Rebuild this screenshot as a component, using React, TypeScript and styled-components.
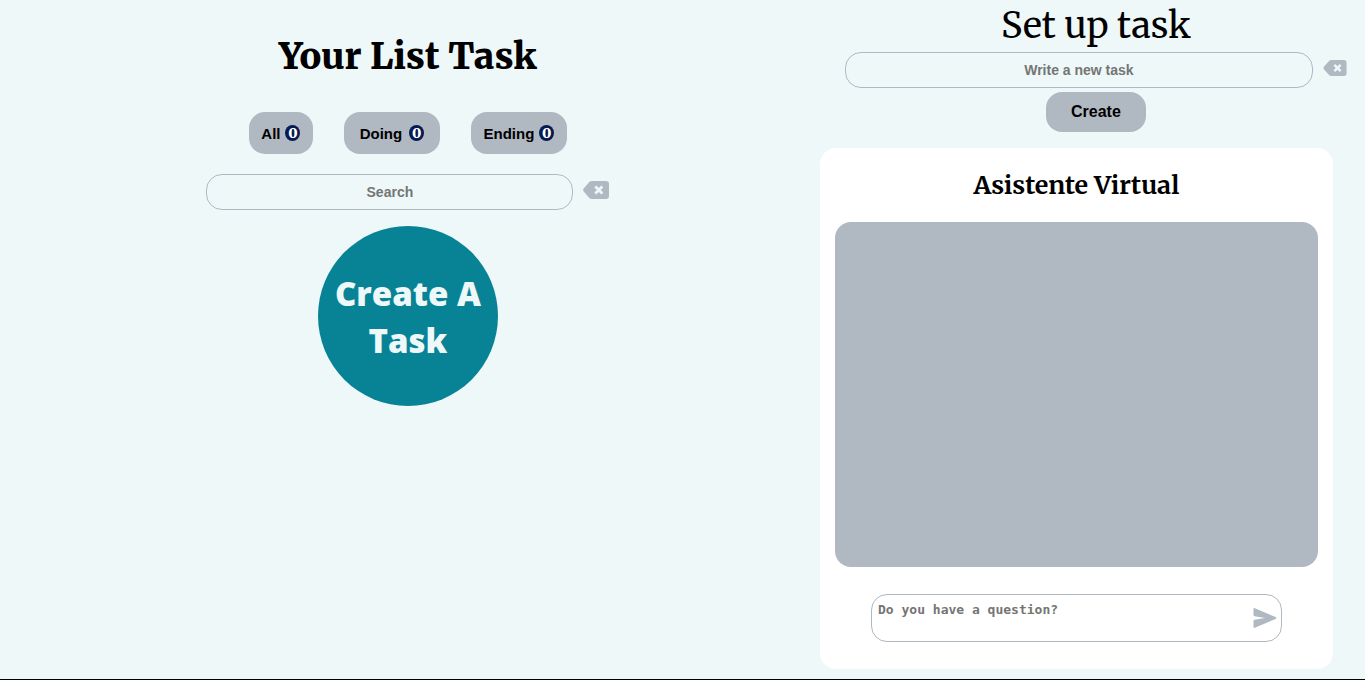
import React from "react";
import styled, { createGlobalStyle } from "styled-components";

const GlobalStyle = createGlobalStyle`
  *, *::before, *::after { box-sizing: border-box; }
  body {
    margin: 0;
    background: #eef8f9;
    color: #000;
    font-family: "Merriweather", "DejaVu Serif", serif;
  }
  h1, h2, p { margin: 0; }
`;

const Page = styled.main`
  display: grid;
  grid-template-columns: minmax(0, 3fr) minmax(0, 2fr);
  column-gap: 2px;
  min-height: 100vh;
  border-bottom: 1px solid #000;
`;

const ListPanel = styled.section`
  display: flex;
  flex-direction: column;
  align-items: center;
  padding: 34px 2px 0 0;
`;

const ListTitle = styled.h1`
  font-size: 36px;
  line-height: 46px;
  font-weight: 900;
`;

const Filters = styled.nav`
  display: flex;
  gap: 31px;
  margin-top: 32px;
`;

const Pill = styled.button`
  border: 0;
  border-radius: 16px;
  background: #b0b8c2;
  color: #000;
  font-family: "Liberation Sans", Arial, sans-serif;
  font-weight: 700;
`;

const FilterButton = styled(Pill)<{ $wide?: boolean; $gap?: number }>`
  display: flex;
  align-items: center;
  justify-content: center;
  gap: ${(p) => p.$gap ?? 5}px;
  width: ${(p) => (p.$wide ? 96 : 64)}px;
  height: 42px;
  padding: 0;
  font-size: 15px;
`;

const Count = styled.span`
  display: flex;
  align-items: center;
  justify-content: center;
  width: 15px;
  height: 16px;
  border-radius: 50%;
  background: #071952;
  color: #fff;
  font: 900 14px/16px "Merriweather", "Liberation Serif", serif;
`;

const FieldRow = styled.div`
  display: flex;
  align-items: center;
  justify-content: center;
  gap: 10px;
  width: 100%;
`;

const SearchRow = styled(FieldRow)`
  margin-top: 20px;
`;

const Field = styled.input<{ $width: string }>`
  width: ${(p) => p.$width};
  height: 36px;
  padding: 0 8px;
  border: 1px solid #b0b8c2;
  border-radius: 16px;
  background: transparent;
  text-align: center;
  font: 700 14px "Liberation Sans", Arial, sans-serif;
  &::placeholder { color: #757575; opacity: 1; }
`;

const IconButton = styled.button`
  display: flex;
  border: 0;
  padding: 0 0 4px;
  background: transparent;
  color: #b0b8c2;
`;

const CreateCircle = styled.button`
  width: 180px;
  height: 180px;
  margin-top: 16px;
  padding: 2px 8px 0;
  border: 0;
  border-radius: 50%;
  background: #088395;
  color: #eef8f9;
  font: 800 33px/47px "Open Sans", "Noto Sans", sans-serif;
`;

const SidePanel = styled.section`
  display: flex;
  flex-direction: column;
  padding-bottom: 10px;
`;

const Setup = styled.form`
  display: flex;
  flex-direction: column;
  align-items: center;
  gap: 4px;
  padding-left: 7px;
`;

const SetupTitle = styled.h2`
  padding-top: 4px;
  font-size: 36px;
  line-height: 44px;
  font-weight: 400;
`;

const CreateButton = styled(Pill)`
  width: 100px;
  height: 40px;
  font-size: 16px;
`;

const Card = styled.section`
  display: flex;
  flex: 1;
  flex-direction: column;
  margin: 16px 32px 0 0;
  padding: 0 15px 27px;
  border-radius: 16px;
  background: #fff;
`;

const CardTitle = styled.h2`
  padding: 21px 0;
  text-align: center;
  font-size: 25px;
  line-height: 32px;
  font-weight: 700;
`;

const Conversation = styled.div`
  flex: 1;
  min-height: 240px;
  border-radius: 16px;
  background: #b0b8c2;
`;

const QuestionBox = styled.div`
  display: flex;
  align-items: center;
  width: 85%;
  height: 48px;
  margin: 27px auto 0;
  padding-right: 4px;
  border: 1px solid #b0b8c2;
  border-radius: 16px;
`;

const Question = styled.textarea`
  flex: 1;
  min-width: 0;
  height: 46px;
  padding: 7px 6px;
  border: 0;
  resize: none;
  outline: 0;
  background: transparent;
  font: 700 13px/16px "DejaVu Sans Mono", monospace;
  &::placeholder { color: #757575; opacity: 1; }
`;

const SendButton = styled(IconButton)`
  padding: 0;
`;

const BackspaceIcon = ({ width, height }: { width: number; height: number }) => (
  <svg width={width} height={height} viewBox="0 0 26 18" aria-hidden="true">
    <path
      fill="currentColor"
      fillRule="evenodd"
      d="M9 0H23Q26 0 26 3V15Q26 18 23 18H9Q7.400 18 6.300 17L.7 10.600Q-.5 9 .7 7.400L6.300 1Q7.400 0 9 0ZM13.200 4.500L11.300 6.400L13.900 9L11.300 11.600L13.200 13.500L15.800 10.900L18.400 13.500L20.300 11.600L17.700 9L20.300 6.400L18.400 4.500L15.800 7.100Z"
    />
  </svg>
);

const SendIcon = () => (
  <svg width="24" height="20" viewBox="0 0 24 20" aria-hidden="true">
    <path
      fill="currentColor"
      d="M.5 1Q.5-.3 1.800.2L22.600 9Q24 10 22.600 11L1.800 19.800Q.5 20.300.5 19V13Q.5 12 1.500 11.800L12 10L1.500 8.200Q.5 8 .5 7Z"
    />
  </svg>
);

const filters = [
  { label: "All", count: 0 },
  { label: "Doing", count: 0, wide: true, gap: 7 },
  { label: "Ending", count: 0, wide: true },
];

export default function App() {
  return (
    <>
      <GlobalStyle />
      <Page>
        <ListPanel>
          <ListTitle>Your List Task</ListTitle>
          <Filters aria-label="Task filters">
            {filters.map((f) => (
              <FilterButton key={f.label} type="button" $wide={f.wide} $gap={f.gap}>
                {f.label}
                <Count>{f.count}</Count>
              </FilterButton>
            ))}
          </Filters>
          <SearchRow>
            <Field $width="45%" type="text" placeholder="Search" aria-label="Search" />
            <IconButton type="button" aria-label="Clear search">
              <BackspaceIcon width={26} height={18} />
            </IconButton>
          </SearchRow>
          <CreateCircle type="button">Create A Task</CreateCircle>
        </ListPanel>
        <SidePanel>
          <Setup onSubmit={(e) => e.preventDefault()}>
            <SetupTitle>Set up task</SetupTitle>
            <FieldRow>
              <Field $width="87%" type="text" placeholder="Write a new task" aria-label="New task" />
              <IconButton type="button" aria-label="Clear task">
                <BackspaceIcon width={24} height={16} />
              </IconButton>
            </FieldRow>
            <CreateButton type="submit">Create</CreateButton>
          </Setup>
          <Card>
            <CardTitle>Asistente Virtual</CardTitle>
            <Conversation role="log" aria-label="Conversation" />
            <QuestionBox>
              <Question placeholder="Do you have a question?" aria-label="Question" />
              <SendButton type="button" aria-label="Send">
                <SendIcon />
              </SendButton>
            </QuestionBox>
          </Card>
        </SidePanel>
      </Page>
    </>
  );
}
